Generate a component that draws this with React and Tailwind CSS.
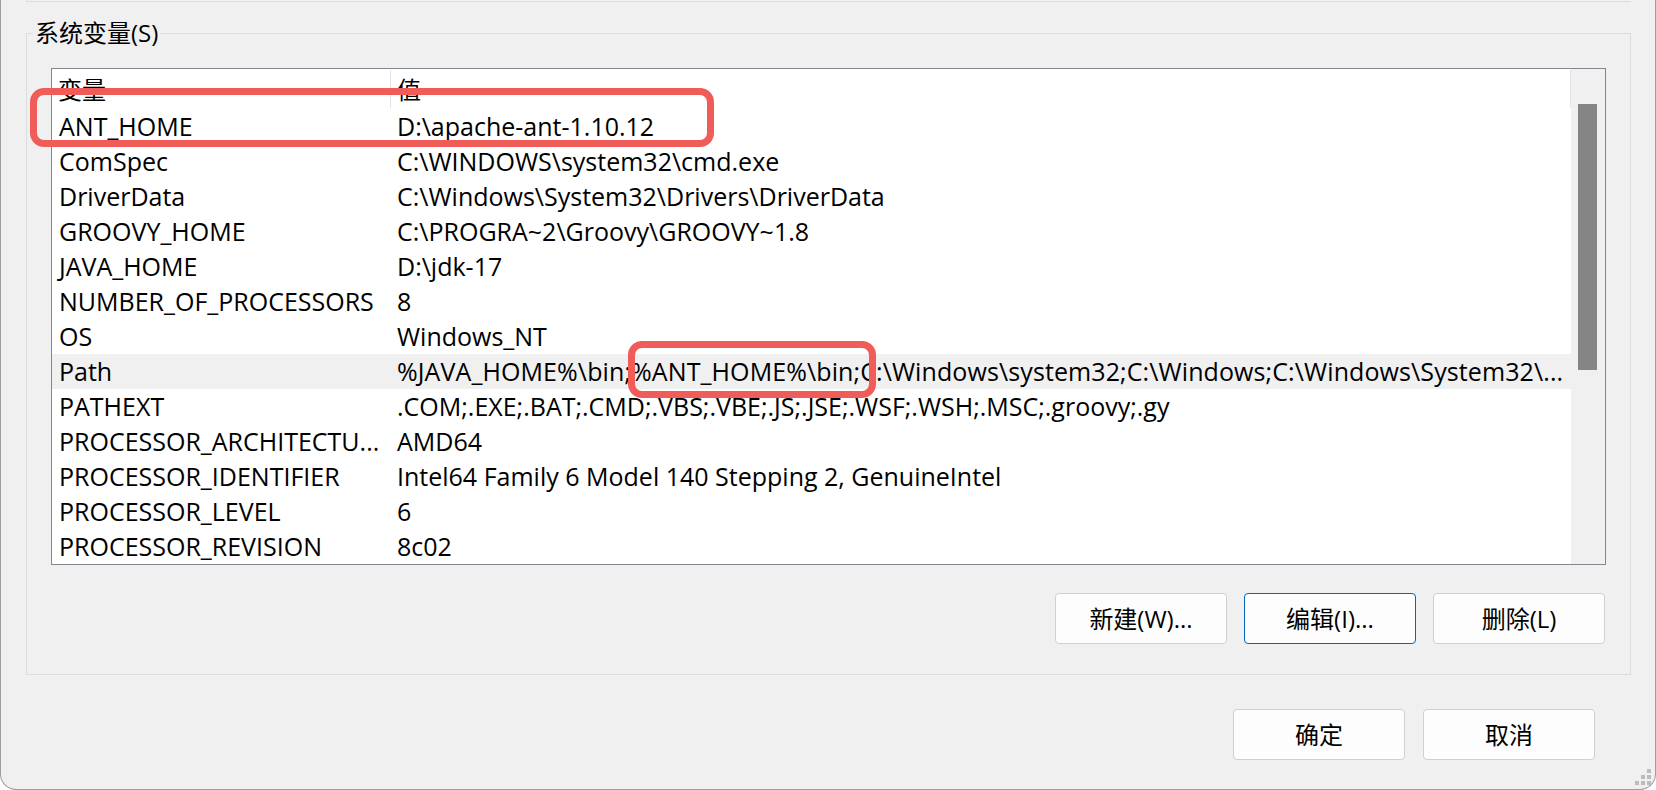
import React from "react";

const rows = [
  ["ANT_HOME", "D:\\apache-ant-1.10.12"],
  ["ComSpec", "C:\\WINDOWS\\system32\\cmd.exe"],
  ["DriverData", "C:\\Windows\\System32\\Drivers\\DriverData"],
  ["GROOVY_HOME", "C:\\PROGRA~2\\Groovy\\GROOVY~1.8"],
  ["JAVA_HOME", "D:\\jdk-17"],
  ["NUMBER_OF_PROCESSORS", "8"],
  ["OS", "Windows_NT"],
  ["Path", "%JAVA_HOME%\\bin;%ANT_HOME%\\bin;C:\\Windows\\system32;C:\\Windows;C:\\Windows\\System32\\..."],
  ["PATHEXT", ".COM;.EXE;.BAT;.CMD;.VBS;.VBE;.JS;.JSE;.WSF;.WSH;.MSC;.groovy;.gy"],
  ["PROCESSOR_ARCHITECTU...", "AMD64"],
  ["PROCESSOR_IDENTIFIER", "Intel64 Family 6 Model 140 Stepping 2, GenuineIntel"],
  ["PROCESSOR_LEVEL", "6"],
  ["PROCESSOR_REVISION", "8c02"],
];

function Btn({ children, focused }) {
  return (
    <div
      className={
        focused
          ? "flex h-[51px] w-[172px] items-center justify-center rounded-[4px] border border-[#0067c0] bg-[#fdfdfd] text-[24px]"
          : "flex h-[51px] w-[172px] items-center justify-center rounded-[4px] border border-[#d0d0d0] bg-[#fdfdfd] text-[24px]"
      }
    >
      {children}
    </div>
  );
}

export default function App() {
  return (
    <div className="relative h-[790px] w-[1656px] overflow-hidden bg-white font-['Open_Sans','Noto_Sans_CJK_SC',sans-serif] text-black">
      <div className="flex h-full flex-col rounded-b-[16px] border-x border-b border-[#9d9d9d] bg-[#f0f0f0] pl-[25px]">
        <div className="h-[2px] w-[1605px] border-b border-l border-[#dcdcdc]" />
        <div className="mt-[31px] flex h-[642px] w-[1605px] flex-col border border-[#dcdcdc]">
          <div className="-mt-[17px] ml-[6px] w-fit bg-[#f0f0f0] px-[2px] text-[24px] leading-[32px]">
            系统变量(S)
          </div>
          <div className="ml-[24px] mt-[19px] flex h-[497px] w-[1555px] border border-[#828790] bg-white">
            <div className="flex min-w-0 flex-1 flex-col">
              <div className="flex h-[40px] shrink-0 text-[24px]">
                <div className="flex w-[338px] items-center pl-[6px] pt-[2px]">变量</div>
                <div className="my-[1px] w-px bg-[#e5e5e5]" />
                <div className="flex flex-1 items-center pl-[6px] pt-[2px]">值</div>
                <div className="my-[1px] w-px bg-[#e5e5e5]" />
              </div>
              {rows.map(([k, v]) => (
                <div
                  key={k}
                  className={
                    k === "Path"
                      ? "flex h-[35px] shrink-0 items-center bg-[#f0f0f0] text-[25px] whitespace-nowrap"
                      : "flex h-[35px] shrink-0 items-center text-[25px] whitespace-nowrap"
                  }
                >
                  <div className="w-[339px] shrink-0 overflow-hidden pl-[7px]">{k}</div>
                  <div
                    className={
                      k === "Path"
                        ? "min-w-0 flex-1 pl-[6px] tracking-[0.1px]"
                        : "min-w-0 flex-1 overflow-hidden pl-[6px]"
                    }
                  >
                    {v}
                  </div>
                </div>
              ))}
            </div>
            <div className="w-[34px] shrink-0 bg-[#f0f0f0]">
              <div className="ml-[7px] mt-[35px] h-[266px] w-[19px] bg-[#858585]" />
            </div>
          </div>
          <div className="mt-[28px] flex justify-end gap-[17px] pr-[25px]">
            <Btn>新建(W)...</Btn>
            <Btn focused>编辑(I)...</Btn>
            <Btn>删除(L)</Btn>
          </div>
        </div>
        <div className="mt-[34px] flex justify-end gap-[18px] pr-[60px]">
          <Btn>确定</Btn>
          <Btn>取消</Btn>
        </div>
      </div>

      {/* resize grip */}
      <div className="absolute left-[1647px] top-[769px] h-[4px] w-[4px] bg-[#bcbcbc]" />
      <div className="absolute left-[1641px] top-[775px] h-[4px] w-[4px] bg-[#bcbcbc]" />
      <div className="absolute left-[1647px] top-[775px] h-[4px] w-[4px] bg-[#bcbcbc]" />
      <div className="absolute left-[1635px] top-[781px] h-[4px] w-[4px] bg-[#bcbcbc]" />
      <div className="absolute left-[1641px] top-[781px] h-[4px] w-[4px] bg-[#bcbcbc]" />
      <div className="absolute left-[1647px] top-[781px] h-[4px] w-[4px] bg-[#bcbcbc]" />

      {/* annotation boxes */}
      <div className="absolute left-[30px] top-[88px] h-[59px] w-[684px] rounded-[14px] border-[7px] border-[#f05c58]" />
      <div className="absolute left-[628px] top-[341px] h-[57px] w-[248px] rounded-[14px] border-[7px] border-[#f05c58]" />
    </div>
  );
}
